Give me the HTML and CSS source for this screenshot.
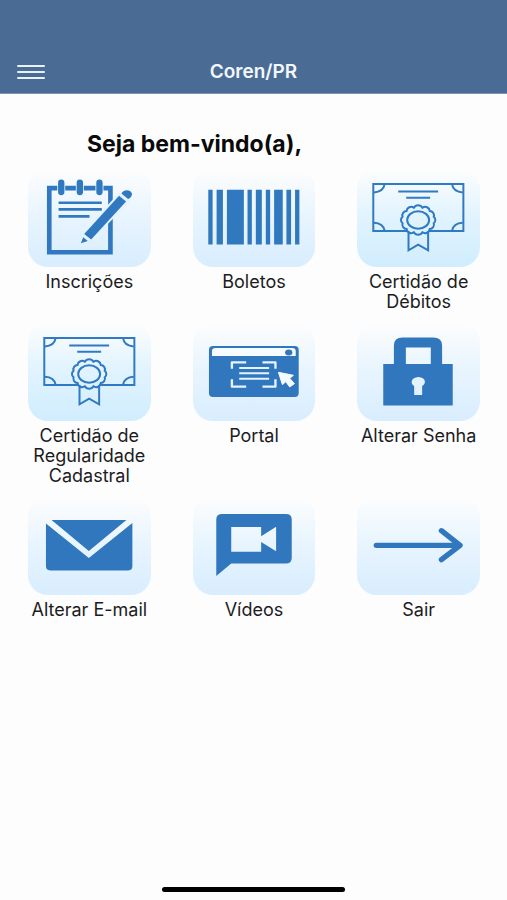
FILE: index.html
```html
<!DOCTYPE html>
<html lang="pt-BR">
<head>
<meta charset="utf-8">
<meta name="viewport" content="width=device-width, initial-scale=1">
<title>Coren/PR</title>
<link rel="stylesheet" href="styles.css">
</head>
<body>
<svg class="defs" aria-hidden="true">
  <symbol id="certificate" viewBox="21 27 369 294">
    <g fill="none" stroke="#3079c3" stroke-width="6">
      <path d="M174 213H70V72H341V213H236"/>
      <path d="M72 97Q100 96 104 73M339 97Q311 96 307 73M72 188Q100 189 104 212M339 188Q311 189 307 212"/>
      <path d="M145 94H265M169 113H241"/>
      <path d="M176 214V271L205 254L235 271V214"/>
      <ellipse cx="205" cy="180" rx="33" ry="26"/>
      <path d="M252 170A13 13 0 0 1 252 190A13 13 0 0 1 240 207A14 14 0 0 1 218 217A15 15 0 0 1 192 217A14 14 0 0 1 170 207A13 13 0 0 1 158 190A13 13 0 0 1 158 170A13 13 0 0 1 170 153A14 14 0 0 1 192 143A15 15 0 0 1 218 143A14 14 0 0 1 240 153A13 13 0 0 1 252 170Z"/>
    </g>
  </symbol>
</svg>
<div class="app">
  <header class="bar">
    <button class="menu" type="button" aria-label="Menu"><span></span><span></span><span></span></button>
    <h1 class="title">Coren/PR</h1>
  </header>
  <main class="content">
    <h2 class="welcome">Seja bem-vindo(a),</h2>
    <nav class="grid">
      <a class="item" href="#inscricoes">
        <span class="tile"><svg viewBox="24 27 369 294" aria-hidden="true">
          <path d="M88 84H272V277H88Z" fill="none" stroke="#3079c0" stroke-width="14"/>
          <path d="M124 68V96M180 68V96M239 68V96" stroke="#e9f5fe" stroke-width="24"/>
          <path d="M124 68V96M180 68V96M239 68V96" stroke="#3079c0" stroke-width="19" stroke-linecap="round"/>
          <path d="M116 128H246M116 148H246M116 169H209" stroke="#3079c0" stroke-width="8"/>
          <path d="M178 254L193 214L298 97L332 122L219 239Z" fill="#e5f3fe"/>
          <path d="M183 250L190 232L204 243Z" fill="#3079c0"/>
          <path d="M193 222L298 107L319 124L214 239Z" fill="#3079c0"/>
          <path d="M305 100C313 87 332 88 337 101C337 108 332 114 325 117Z" fill="#3079c0"/>
        </svg></span>
        <span class="label">Inscrições</span>
      </a>
      <a class="item" href="#boletos">
        <span class="tile"><svg viewBox="24 27 369 294" aria-hidden="true">
          <path fill="#3079bf" d="M70 89H83V254H70ZM95 89H114V254H95ZM126 89H177V254H126ZM188 89H201V254H188ZM213 89H231V254H213ZM243 89H256V254H243ZM268 89H294V254H268ZM305 89H319V254H305ZM331 89H344V254H331Z"/>
        </svg></span>
        <span class="label">Boletos</span>
      </a>
      <a class="item" href="#debitos">
        <span class="tile tile-sky"><svg aria-hidden="true"><use href="#certificate"/></svg></span>
        <span class="label">Certidão de Débitos</span>
      </a>
      <a class="item" href="#regularidade">
        <span class="tile tile-sky"><svg aria-hidden="true"><use href="#certificate"/></svg></span>
        <span class="label">Certidão de Regularidade Cadastral</span>
      </a>
      <a class="item" href="#portal">
        <span class="tile"><svg viewBox="24 24 369 294" aria-hidden="true">
          <rect x="72" y="93" width="270" height="153" rx="12" fill="#3077be"/>
          <path d="M81 123V108Q81 99 92 99H322Q333 99 333 108V123Z" fill="#f5fbff"/>
          <ellipse cx="312" cy="112" rx="11" ry="9" fill="#3077be"/>
          <path d="M141 161V142H184M233 142H272V161M141 193V215H184M233 215H272V193" fill="none" stroke="#e7f4ff" stroke-width="7" stroke-linejoin="round"/>
          <path d="M163 159H253M163 175H253M163 191H253" stroke="#e7f4ff" stroke-width="6"/>
          <path d="M281 172L326 181L315 190L329 206L315 216L303 200L293 209Z" fill="#f5fbff" stroke="#f5fbff" stroke-width="3" stroke-linejoin="round"/>
        </svg></span>
        <span class="label">Portal</span>
      </a>
      <a class="item" href="#senha">
        <span class="tile"><svg viewBox="21 24 369 294" aria-hidden="true">
          <path fill="#3077be" fill-rule="evenodd" d="M100 147H132V91Q132 67 158 67H250Q277 67 277 91V147H309V272H100ZM168 97V147H243V97ZM193 240V213C181 207 182 187 206 186C229 187 230 207 217 213V240Z"/>
        </svg></span>
        <span class="label">Alterar Senha</span>
      </a>
      <a class="item" href="#email">
        <span class="tile"><svg viewBox="24 24 369 294" aria-hidden="true">
          <path fill="#3077be" d="M95 93H320L207 186ZM78 103L207 207L338 102V232Q338 245 323 245H94Q78 245 78 232Z"/>
        </svg></span>
        <span class="label">Alterar E-mail</span>
      </a>
      <a class="item" href="#videos">
        <span class="tile"><svg viewBox="24 24 369 294" aria-hidden="true">
          <path fill="#3077be" fill-rule="evenodd" d="M94 261V91Q94 75 112 75H303Q321 75 321 91V207Q321 224 303 224H139ZM139 114V188H229V159L274 187V113L229 142V114Z"/>
        </svg></span>
        <span class="label">Vídeos</span>
      </a>
      <a class="item" href="#sair">
        <span class="tile"><svg viewBox="21 24 369 294" aria-hidden="true">
          <path d="M79 169H329M275 125L331 169L275 212" fill="none" stroke="#3077be" stroke-width="16" stroke-linecap="round" stroke-linejoin="round"/>
        </svg></span>
        <span class="label">Sair</span>
      </a>
    </nav>
  </main>
  <div class="home"></div>
</div>
</body>
</html>
```

FILE: styles.css
```css
* { box-sizing: border-box; }

body {
  margin: 0;
  background: #fdfdfd;
  color: #1c1c1e;
  font-family: Inter, "Liberation Sans", sans-serif;
}

.defs { display: none; }

.app {
  min-height: 100vh;
  display: flex;
  flex-direction: column;
}

.bar {
  display: grid;
  grid-template-columns: 1fr auto 1fr;
  align-items: center;
  padding: 50px 17px 0;
  height: 94px;
  background: #4a6c94;
  border-bottom: 1px solid #8096b0;
}

.menu {
  display: flex;
  flex-direction: column;
  gap: 4px;
  width: 28px;
  padding: 0;
  border: 0;
  background: none;
}

.menu span {
  height: 2px;
  width: 100%;
  border-radius: 1px;
  background: #e8f0fa;
}

.title {
  margin: 0;
  color: #f2f7ff;
  font-size: 19px;
  line-height: 24px;
  font-weight: 600;
}

.content { flex: 1; padding: 38px 27px 0 28px; }

.welcome {
  margin: 0 0 13px;
  padding-left: 59px;
  color: #0a0a0a;
  font-size: 23px;
  line-height: 24px;
  font-weight: 700;
}

.grid {
  display: grid;
  grid-template-columns: repeat(3, 1fr);
  gap: 11px 42px;
}

.item {
  display: flex;
  flex-direction: column;
  gap: 5px;
  color: inherit;
  text-decoration: none;
}

.tile {
  display: block;
  height: 98px;
  border-radius: 20px;
  background: linear-gradient(#fdfdfd, #e9f5fe 45%, #d8edfe);
}

.tile-sky { background: linear-gradient(#fdfdfd, #e2f4fe 45%, #d0edfe); }

.tile svg {
  display: block;
  width: 100%;
  height: 100%;
}

.label {
  font-size: 18px;
  line-height: 20px;
  text-align: center;
}

.home {
  align-self: center;
  width: 36%;
  height: 5px;
  margin-bottom: 8px;
  border-radius: 3px;
  background: #000;
}
```
